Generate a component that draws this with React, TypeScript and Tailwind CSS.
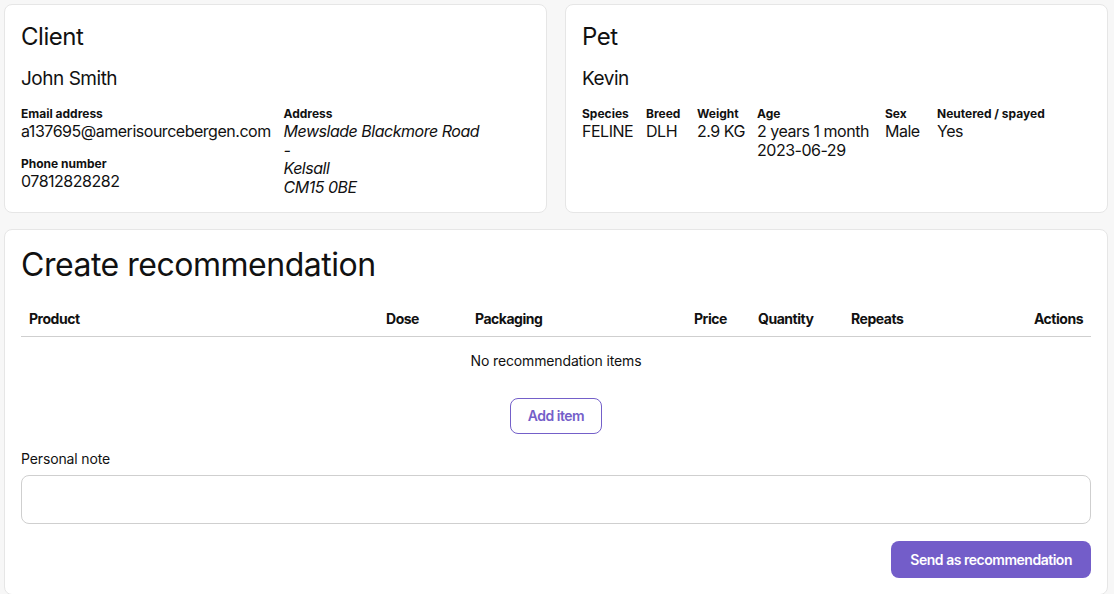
import React from "react";

const font = { fontFamily: "Inter, 'Noto Sans', sans-serif" };

function Field({ label, children }: { label: string; children: React.ReactNode }) {
    return (
        <div>
            <p className="text-[12px] font-bold leading-[16px] tracking-normal text-[#111]">{label}</p>
            <div className="text-[16px] leading-[18.6px] text-[#111]">{children}</div>
        </div>
    );
}

function ClientCard() {
    return (
        <div className="bg-white border border-[#e6e6e6] rounded-lg p-4">
            <h2 className="text-[24px] leading-[32px] text-[#111]">Client</h2>
            <p className="mt-[12px] text-[19px] leading-[28px] text-[#111]">John Smith</p>
            <div className="mt-[13px] grid grid-cols-2 gap-x-4">
                <div className="flex flex-col gap-[15px]">
                    <Field label="Email address">a137695@amerisourcebergen.com</Field>
                    <Field label="Phone number">07812828282</Field>
                </div>
                <Field label="Address">
                    <div className="italic">
                        <p>Mewslade Blackmore Road</p>
                        <p>-</p>
                        <p>Kelsall</p>
                        <p>CM15 0BE</p>
                    </div>
                </Field>
            </div>
        </div>
    );
}

function PetCard() {
    const cols = [
        { label: "Species", value: ["FELINE"], w: "w-[64px]" },
        { label: "Breed", value: ["DLH"], w: "w-[51px]" },
        { label: "Weight", value: ["2.9 KG"], w: "w-[60px]" },
        { label: "Age", value: ["2 years 1 month", "2023-06-29"], w: "w-[128px]" },
        { label: "Sex", value: ["Male"], w: "w-[52px]" },
        { label: "Neutered / spayed", value: ["Yes"], w: "" },
    ];
    return (
        <div className="bg-white border border-[#e6e6e6] rounded-lg p-4">
            <h2 className="text-[24px] leading-[32px] text-[#111]">Pet</h2>
            <p className="mt-[12px] text-[19px] leading-[28px] text-[#111]">Kevin</p>
            <div className="mt-[13px] flex">
                {cols.map((c) => (
                    <div key={c.label} className={`${c.w} shrink-0`}>
                        <Field label={c.label}>
                            {c.value.map((v) => (
                                <p key={v}>{v}</p>
                            ))}
                        </Field>
                    </div>
                ))}
            </div>
        </div>
    );
}

function RecommendationCard() {
    return (
        <div className="bg-white border border-[#e6e6e6] rounded-lg p-4">
            <h1 className="text-[32px] leading-[38px] text-[#111]">Create recommendation</h1>

            {/* Items table */}
            <table className="mt-[16px] w-full table-fixed border-collapse text-[14px] text-[#111]">
                <thead>
                    <tr className="border-b border-[#cfcfcf]">
                        <th className="w-[357px] px-2 h-[36px] text-left font-bold">Product</th>
                        <th className="w-[89px] px-2 text-left font-bold">Dose</th>
                        <th className="w-[219px] px-2 text-left font-bold">Packaging</th>
                        <th className="w-[64px] px-2 text-left font-bold">Price</th>
                        <th className="w-[93px] px-2 text-left font-bold">Quantity</th>
                        <th className="w-[120px] px-2 text-left font-bold">Repeats</th>
                        <th className="px-2 text-right font-bold">Actions</th>
                    </tr>
                </thead>
                <tbody>
                    <tr>
                        <td colSpan={7} className="py-[14px] leading-[20px] text-center tracking-[-0.01em]">
                            No recommendation items
                        </td>
                    </tr>
                </tbody>
            </table>

            <div className="mt-[13px] flex justify-center">
                <button className="h-[36px] px-[17px] rounded-lg border border-[#7460c9] text-[#7460c9] text-[14px] font-semibold bg-white">
                    Add item
                </button>
            </div>

            <label className="block mt-[15px] text-[14px] leading-[20px] tracking-[-0.01em] text-[#111]">Personal note</label>
            <textarea className="mt-[6px] block w-full h-[49px] rounded-lg border border-[#cfcfcf] resize-none outline-none px-3 py-2 text-[14px]" />

            <div className="mt-[17px] flex justify-end">
                <button className="h-[37px] px-[19px] rounded-lg bg-[#735dc9] text-white text-[14px] font-semibold">
                    Send as recommendation
                </button>
            </div>
        </div>
    );
}

export default function App() {
    return (
        <div className="min-h-screen bg-[#f7f7f7] pl-[4px] pr-[6px] pt-[4px] tracking-[-0.03em]" style={font}>
            <div className="grid grid-cols-2 gap-x-[18px]">
                <ClientCard />
                <PetCard />
            </div>
            <div className="mt-[16px]">
                <RecommendationCard />
            </div>
        </div>
    );
}
